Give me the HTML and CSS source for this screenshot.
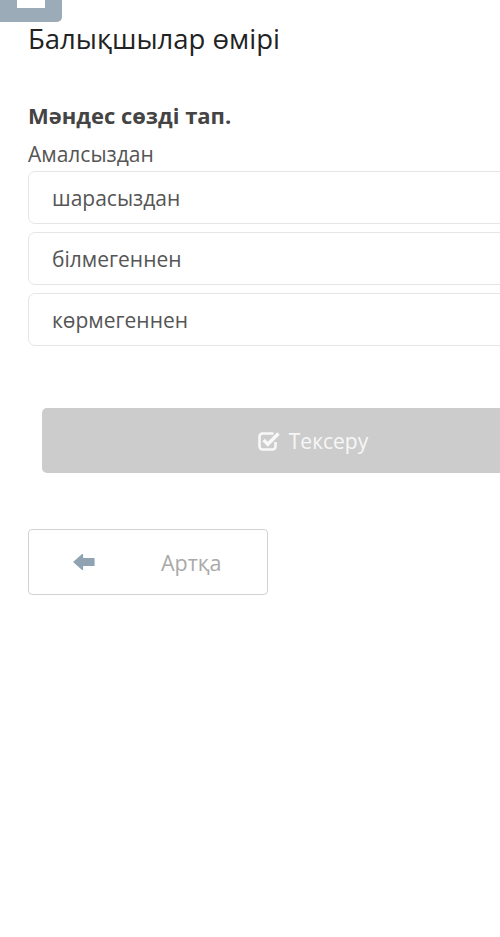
FILE: index.html
```html
<!DOCTYPE html>
<html lang="kk">
<head>
<meta charset="utf-8">
<link rel="stylesheet" href="styles.css">
</head>
<body>
<div class="tab"><span class="tab-mark"></span></div>
<main class="content">
  <h1 class="title">Балықшылар өмірі</h1>
  <h2 class="question">Мәндес сөзді тап.</h2>
  <p class="word">Амалсыздан</p>
  <div class="options">
    <div class="option">шарасыздан</div>
    <div class="option">білмегеннен</div>
    <div class="option">көрмегеннен</div>
  </div>
  <div class="check-row">
    <button class="check-btn">
      <svg class="check-icon" width="23" height="20" viewBox="0 0 23 20">
        <path d="M15.5 2.5H4.5A3 3 0 0 0 1.5 5.5V15.5A3 3 0 0 0 4.5 18.5H14.5A3 3 0 0 0 17.5 15.5V11" fill="none" stroke="#f8f8f8" stroke-width="2.6"/>
        <path d="M5.5 9L9.8 13.3L20.5 2.5" fill="none" stroke="#f8f8f8" stroke-width="3.4"/>
      </svg>
      <span>Тексеру</span>
    </button>
  </div>
  <button class="back-btn">
    <svg class="back-icon" width="22" height="16" viewBox="0 0 22 16">
      <path d="M9.5 0.5L1 8L9.5 15.5V11.5H21V4.5H9.5Z" fill="#8fa3b2" stroke="#8fa3b2" stroke-width="1.2" stroke-linejoin="round"/>
    </svg>
    <span class="back-text">Артқа</span>
  </button>
</main>
</body>
</html>
```
FILE: styles.css
```css
html, body {
  margin: 0;
  padding: 0;
  background: #ffffff;
  overflow: hidden;
}
body {
  width: 500px;
  height: 937px;
  font-family: "Open Sans", "Noto Sans", sans-serif;
}
.tab {
  width: 62px;
  height: 22px;
  background: #9babb7;
  border-bottom-right-radius: 5px;
  display: flex;
  justify-content: center;
}
.tab-mark {
  display: block;
  width: 28px;
  height: 8px;
  margin-left: -1px;
  background: #ffffff;
}
.content {
  padding-left: 28px;
  width: 570px;
}
.title {
  margin: 1px 0 0;
  font-size: 27.5px;
  font-weight: 400;
  line-height: 32px;
  color: #222;
}
.question {
  margin: 46px 0 0;
  font-size: 22px;
  font-weight: 700;
  line-height: 28px;
  color: #444;
}
.word {
  margin: 13px 0 0;
  font-size: 21px;
  line-height: 24px;
  color: #555;
}
.options {
  display: flex;
  flex-direction: column;
  gap: 8px;
  margin-top: 5px;
}
.option {
  height: 51px;
  border: 1px solid #e6e6e6;
  border-radius: 7px;
  padding-left: 23px;
  display: flex;
  align-items: center;
  font-size: 21px;
  color: #555;
}
.check-row {
  margin-top: 62px;
  padding-left: 14px;
}
.check-btn {
  width: 542px;
  height: 65px;
  border: none;
  border-radius: 5px;
  background: #cccccc;
  color: #f7f7f7;
  font-family: inherit;
  font-size: 21px;
  display: flex;
  align-items: center;
  justify-content: center;
  gap: 8px;
  padding: 0;
}
.check-icon {
  display: block;
}
.back-btn {
  margin-top: 56px;
  width: 240px;
  height: 66px;
  border: 1px solid #cfd3d6;
  border-radius: 4px;
  background: #fff;
  font-family: inherit;
  display: flex;
  align-items: center;
  padding: 0 0 0 44px;
}
.back-icon {
  display: block;
}
.back-text {
  margin-left: 66px;
  font-size: 21.5px;
  color: #a9a9a9;
}
```
